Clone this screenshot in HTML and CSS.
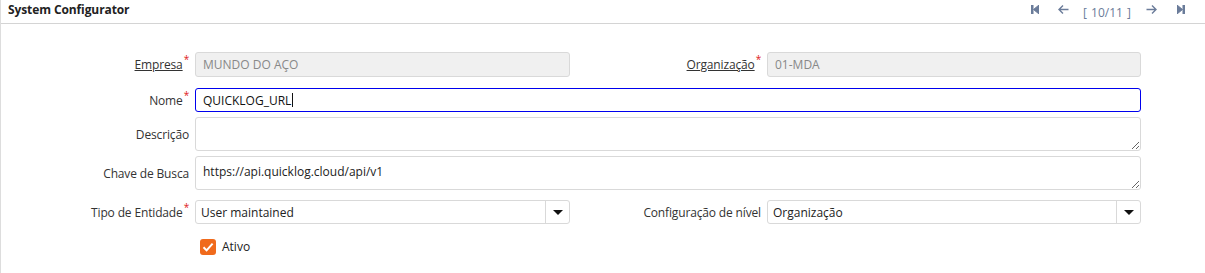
FILE: index.html
```html
<!DOCTYPE html>
<html lang="pt-BR">
<head>
    <meta charset="UTF-8">
    <title>System Configurator</title>
    <link rel="stylesheet" href="styles.css">
</head>
<body>
    <div class="panel">
        <div class="panel-header">
            <span class="panel-title">System Configurator</span>
            <div class="nav">
                <span class="nav-btn">
                    <svg width="8" height="9" viewBox="0 0 8 9"><rect x="0" y="0" width="2" height="9"/><path d="M8 0 L2.5 4.5 L8 9 Z"/></svg>
                </span>
                <span class="nav-btn">
                    <svg width="11" height="9" viewBox="0 0 11 9"><path d="M5 0.5 L1 4.5 L5 8.5 M1 4.5 H10.5" fill="none" stroke-width="1.4"/></svg>
                </span>
                <span class="nav-count">[ 10/11 ]</span>
                <span class="nav-btn">
                    <svg width="11" height="9" viewBox="0 0 11 9"><path d="M6 0.5 L10 4.5 L6 8.5 M10 4.5 H0.5" fill="none" stroke-width="1.4"/></svg>
                </span>
                <span class="nav-btn">
                    <svg width="8" height="9" viewBox="0 0 8 9"><path d="M0 0 L5.5 4.5 L0 9 Z"/><rect x="6" y="0" width="2" height="9"/></svg>
                </span>
            </div>
        </div>

        <div class="form">
            <label class="field-label"><a href="#">Empresa</a><span class="req">*</span></label>
            <input class="field field-disabled" type="text" value="MUNDO DO AÇO" disabled>
            <label class="field-label"><a href="#">Organização</a><span class="req">*</span></label>
            <input class="field field-disabled" type="text" value="01-MDA" disabled>

            <label class="field-label row-name">Nome<span class="req">*</span></label>
            <div class="field field-focus wide row-name">QUICKLOG_URL<span class="caret"></span></div>

            <label class="field-label">Descrição</label>
            <textarea class="field field-area wide"></textarea>

            <label class="field-label">Chave de Busca</label>
            <textarea class="field field-area wide">https://api.quicklog.cloud/api/v1</textarea>

            <label class="field-label row-type">Tipo de Entidade<span class="req">*</span></label>
            <div class="field select row-type">
                <span class="select-value">User maintained</span>
                <span class="select-btn"><span class="arrow"></span></span>
            </div>
            <label class="field-label row-type">Configuração de nível</label>
            <div class="field select row-type">
                <span class="select-value">Organização</span>
                <span class="select-btn"><span class="arrow"></span></span>
            </div>

            <div class="check-row">
                <span class="checkbox">
                    <svg width="16" height="16" viewBox="0 0 16 16"><path d="M3.5 8.3 L6.6 11.4 L12.6 4.6" fill="none" stroke="#fff" stroke-width="2"/></svg>
                </span>
                <span class="check-label">Ativo</span>
            </div>
        </div>
    </div>
</body>
</html>
```

FILE: styles.css
```css
body {
    margin: 0;
    font-family: 'Open Sans', 'Noto Sans', sans-serif;
    font-size: 12px;
    color: #333;
    background: #fff;
}
.panel {
    border-left: 1px solid #ddd;
    height: 273px;
    box-sizing: border-box;
}
.panel-header {
    height: 23px;
    border-bottom: 1px solid #d4d4d4;
    display: flex;
    align-items: center;
    justify-content: space-between;
    padding-left: 7px;
}
.panel-title {
    font-weight: bold;
    font-size: 12px;
    color: #222;
    margin-top: -4px;
    letter-spacing: -0.1px;
}
.nav {
    display: flex;
    align-items: center;
    margin-right: 10px;
    margin-top: -4px;
    color: #6b7c9a;
}
.nav-btn {
    display: flex;
    width: 29px;
    justify-content: center;
}
.nav-btn svg {
    fill: #6b7c9a;
    stroke: #6b7c9a;
}
.nav-count {
    font-size: 12px;
    padding: 0 6px 0 5px;
    margin-top: 5px;
    word-spacing: 1px;
}
.form {
    display: grid;
    grid-template-columns: 189px 375px 187px 374px;
    column-gap: 5px;
    row-gap: 5px;
    padding-top: 28px;
    align-items: center;
}
.field-label {
    text-align: right;
    color: #333;
    white-space: nowrap;
    padding-right: 1px;
    letter-spacing: -0.15px;
}
.field-label a {
    color: #333;
    text-decoration: underline;
}
.req {
    color: #e02020;
    font-size: 10px;
    vertical-align: top;
    position: relative;
    top: -4px;
    margin-left: 1px;
}
.field {
    box-sizing: border-box;
    height: 25px;
    border: 1px solid #d9d9d9;
    border-radius: 3px;
    padding: 0 7px;
    font-family: inherit;
    font-size: 12px;
    color: #222;
    background: #fff;
    margin: 0;
}
.field-disabled {
    background: #f0f0f0;
    color: #888;
}
.wide {
    grid-column: 2 / 5;
}
.field-focus {
    height: 24px;
    border: 1px solid #0000ee;
    display: flex;
    align-items: center;
    color: #111;
}
.row-name {
    margin-top: 6px;
}
.caret {
    display: inline-block;
    width: 1px;
    height: 14px;
    background: #111;
    margin-left: 1px;
}
.field-area {
    height: 34px;
    resize: vertical;
    padding: 6px 7px;
    line-height: 17px;
}
.select {
    display: flex;
    align-items: center;
    height: 24px;
    padding: 0;
}
.row-type {
    margin-top: 5px;
}
.select-value {
    flex: 1;
    padding-left: 5px;
    color: #222;
}
.select-btn {
    width: 23px;
    height: 100%;
    border-left: 1px solid #d9d9d9;
    display: flex;
    align-items: center;
    justify-content: center;
}
.arrow {
    width: 0;
    height: 0;
    border-left: 5px solid transparent;
    border-right: 5px solid transparent;
    border-top: 5px solid #111;
}
.check-row {
    grid-column: 2 / 5;
    display: flex;
    align-items: center;
    margin-top: 9px;
    padding-left: 5px;
}
.checkbox {
    width: 16px;
    height: 16px;
    background: #f06a1c;
    border-radius: 3px;
    display: flex;
}
.check-label {
    margin-left: 6px;
    color: #222;
}
```
